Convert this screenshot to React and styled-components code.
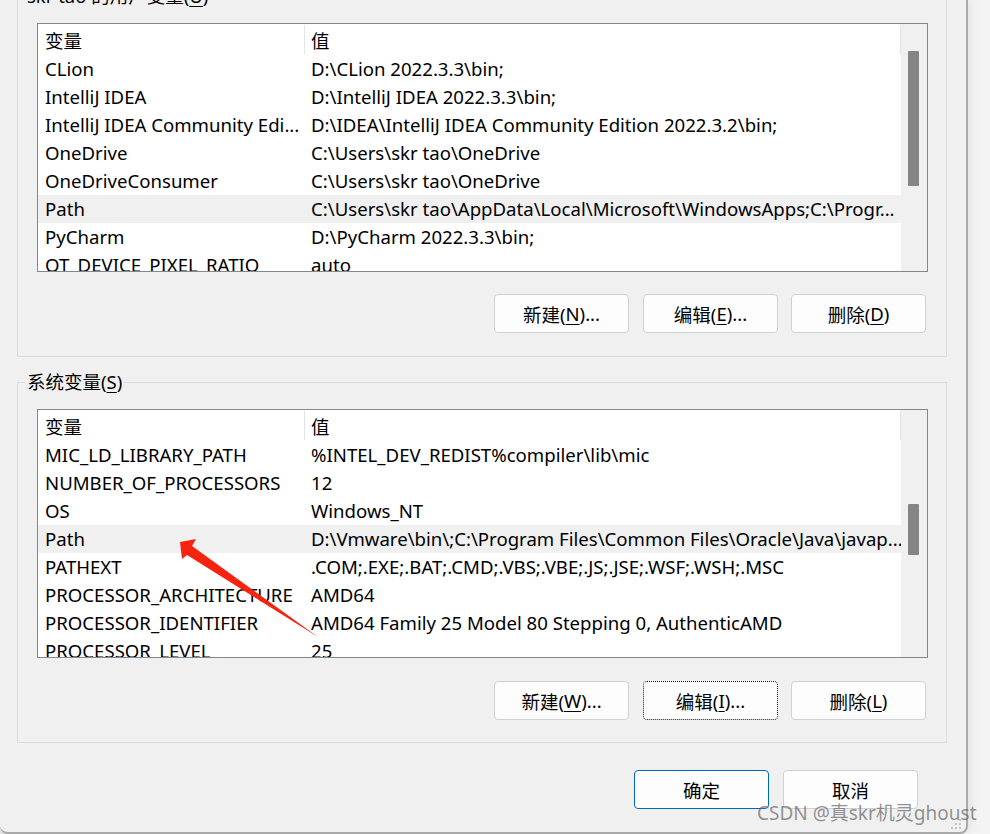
import React from "react";
import styled, { createGlobalStyle } from "styled-components";

const GlobalStyle = createGlobalStyle`
  html, body {
    margin: 0;
    padding: 0;
    background: #f3f3f3;
    overflow: hidden;
  }
  body {
    font-family: "Noto Sans", "Noto Sans CJK SC", sans-serif;
    color: #000;
  }
`;

const userVars = [
  ["CLion", "D:\\CLion 2022.3.3\\bin;"],
  ["IntelliJ IDEA", "D:\\IntelliJ IDEA 2022.3.3\\bin;"],
  ["IntelliJ IDEA Community Edi...", "D:\\IDEA\\IntelliJ IDEA Community Edition 2022.3.2\\bin;"],
  ["OneDrive", "C:\\Users\\skr tao\\OneDrive"],
  ["OneDriveConsumer", "C:\\Users\\skr tao\\OneDrive"],
  ["Path", "C:\\Users\\skr tao\\AppData\\Local\\Microsoft\\WindowsApps;C:\\Progr...", true],
  ["PyCharm", "D:\\PyCharm 2022.3.3\\bin;"],
  ["QT_DEVICE_PIXEL_RATIO", "auto"],
];

const sysVars = [
  ["MIC_LD_LIBRARY_PATH", "%INTEL_DEV_REDIST%compiler\\lib\\mic"],
  ["NUMBER_OF_PROCESSORS", "12"],
  ["OS", "Windows_NT"],
  ["Path", "D:\\Vmware\\bin\\;C:\\Program Files\\Common Files\\Oracle\\Java\\javap...", true],
  ["PATHEXT", ".COM;.EXE;.BAT;.CMD;.VBS;.VBE;.JS;.JSE;.WSF;.WSH;.MSC"],
  ["PROCESSOR_ARCHITECTURE", "AMD64"],
  ["PROCESSOR_IDENTIFIER", "AMD64 Family 25 Model 80 Stepping 0, AuthenticAMD"],
  ["PROCESSOR_LEVEL", "25"],
];

function VarList({ rows, thumbTop, thumbHeight }) {
  return (
    <ListBox>
      <ListArea>
        <Header>
          <HeadCell $first>变量</HeadCell>
          <HeadCell>值</HeadCell>
        </Header>
        {rows.map(([name, value, selected]) => (
          <Row key={name} $selected={selected}>
            <Cell>{name}</Cell>
            <Cell $value>{value}</Cell>
          </Row>
        ))}
      </ListArea>
      <ScrollBar>
        <Thumb style={{ marginTop: thumbTop, height: thumbHeight }} />
      </ScrollBar>
    </ListBox>
  );
}

function App() {
  return (
    <Page>
      <GlobalStyle />
      <Window>
        <Group $first>
          <Legend>skr tao 的用户变量(<Key>U</Key>)</Legend>
          <VarList rows={userVars} thumbTop={27} thumbHeight={135} />
          <ButtonRow>
            <Button>新建(<Key>N</Key>)...</Button>
            <Button>编辑(<Key>E</Key>)...</Button>
            <Button>删除(<Key>D</Key>)</Button>
          </ButtonRow>
        </Group>

        <Group>
          <Legend>系统变量(<Key>S</Key>)</Legend>
          <VarList rows={sysVars} thumbTop={94} thumbHeight={51} />
          <ButtonRow $low>
            <Button>新建(<Key>W</Key>)...</Button>
            <Button $focused>编辑(<Key>I</Key>)...</Button>
            <Button>删除(<Key>L</Key>)</Button>
          </ButtonRow>
        </Group>

        <DialogButtons>
          <Button $default>确定</Button>
          <Button>取消</Button>
        </DialogButtons>

        <Arrow width="150" height="110" viewBox="0 0 150 110">
          <polygon points="5,7 21,4 17,11 143,102 12,20 7,24" fill="#f5230f" />
        </Arrow>

        <Grip width="12" height="10" viewBox="0 0 12 10">
          <rect x="8" y="0" width="2" height="2" fill="#c4c4c4" />
          <rect x="4" y="4" width="2" height="2" fill="#c4c4c4" />
          <rect x="8" y="4" width="2" height="2" fill="#c4c4c4" />
          <rect x="0" y="8" width="2" height="2" fill="#c4c4c4" />
          <rect x="4" y="8" width="2" height="2" fill="#c4c4c4" />
          <rect x="8" y="8" width="2" height="2" fill="#c4c4c4" />
        </Grip>
      </Window>
      <Watermark>CSDN @真skr机灵ghoust</Watermark>
    </Page>
  );
}

const Page = styled.div`
  position: relative;
  width: 990px;
  height: 834px;
  overflow: hidden;
  background: linear-gradient(to right, #e4e4e4, #f4f4f4 60%);
`;

const Window = styled.div`
  position: relative;
  box-sizing: border-box;
  width: 968px;
  height: 834px;
  background: #f0f0f0;
  border-right: 2px solid #a9a9a9;
  border-bottom: 2px solid #a9a9a9;
  border-bottom-left-radius: 8px;
  border-bottom-right-radius: 8px;
  padding: 0 19px 0 17px;
  box-shadow: 3px 0 10px rgba(0, 0, 0, 0.08);
  display: flex;
  flex-direction: column;
`;

const Group = styled.div`
  position: relative;
  width: 930px;
  box-sizing: border-box;
  border: 1px solid #dcdcdc;
  margin-top: ${(p) => (p.$first ? "-4px" : "25px")};
  padding: 26px 18px 23px 19px;
`;

const Legend = styled.div`
  position: absolute;
  top: -13px;
  left: 7px;
  padding: 0 2px;
  background: #f0f0f0;
  font-size: 18.5px;
  line-height: 24px;
  white-space: nowrap;
`;

const Key = styled.span`
  text-decoration: underline;
  text-underline-offset: 3px;
`;

const ListBox = styled.div`
  display: flex;
  height: 249px;
  box-sizing: border-box;
  border: 1px solid #828790;
  background: #fff;
  overflow: hidden;
`;

const ListArea = styled.div`
  flex: 1;
  min-width: 0;
  overflow: hidden;
`;

const Header = styled.div`
  display: grid;
  grid-template-columns: 267px 1fr;
  height: 31px;
  align-items: stretch;
`;

const HeadCell = styled.div`
  display: flex;
  align-items: center;
  padding-left: ${(p) => (p.$first ? "7px" : "6px")};
  margin: 1px 0 1px;
  border-right: 1px solid #e3e3e3;
  font-size: 18.5px;
`;

const Row = styled.div`
  display: grid;
  grid-template-columns: 267px 1fr;
  height: 28px;
  align-items: center;
  background: ${(p) => (p.$selected ? "#f0f0f0" : "#fff")};
`;

const Cell = styled.div`
  padding-left: ${(p) => (p.$value ? "6px" : "7px")};
  font-size: 18.6px;
  line-height: 28px;
  white-space: nowrap;
  overflow: hidden;
`;

const ScrollBar = styled.div`
  width: 26px;
  flex-shrink: 0;
  background: #f0f0f0;
  display: flex;
  flex-direction: column;
  align-items: flex-start;
`;

const Thumb = styled.div`
  margin-left: 7px;
  width: 11px;
  background: #858585;
  border-radius: 1px;
`;

const ButtonRow = styled.div`
  display: flex;
  justify-content: flex-end;
  gap: 13px;
  margin-top: ${(p) => (p.$low ? "23px" : "22px")};
  margin-bottom: ${(p) => (p.$low ? "-1px" : "0")};
  margin-right: 2px;

  & > :first-child {
    margin-right: 1px;
  }
`;

const DialogButtons = styled.div`
  display: flex;
  justify-content: flex-end;
  gap: 14px;
  margin-top: 27px;
  margin-right: 29px;
`;

const Button = styled.div`
  width: 135px;
  height: 39px;
  box-sizing: border-box;
  display: flex;
  align-items: center;
  justify-content: center;
  background: #fdfdfd;
  border: 1px ${(p) => (p.$focused ? "dotted" : "solid")};
  border-color: ${(p) => (p.$default ? "#0067c0" : p.$focused ? "#1a1a1a" : "#d0d0d0")};
  border-radius: 4px;
  font-size: 18.5px;
  white-space: nowrap;
  cursor: default;
`;

const Arrow = styled.svg`
  position: absolute;
  left: 175px;
  top: 535px;
  pointer-events: none;
`;

const Grip = styled.svg`
  position: absolute;
  right: 3px;
  bottom: 3px;
`;

const Watermark = styled.div`
  position: absolute;
  left: 757px;
  top: 800px;
  font-size: 19px;
  line-height: 26px;
  color: rgba(105, 105, 105, 0.72);
  font-family: "Noto Sans", "Noto Sans CJK SC", sans-serif;
  white-space: nowrap;
  pointer-events: none;
`;

export default App;
